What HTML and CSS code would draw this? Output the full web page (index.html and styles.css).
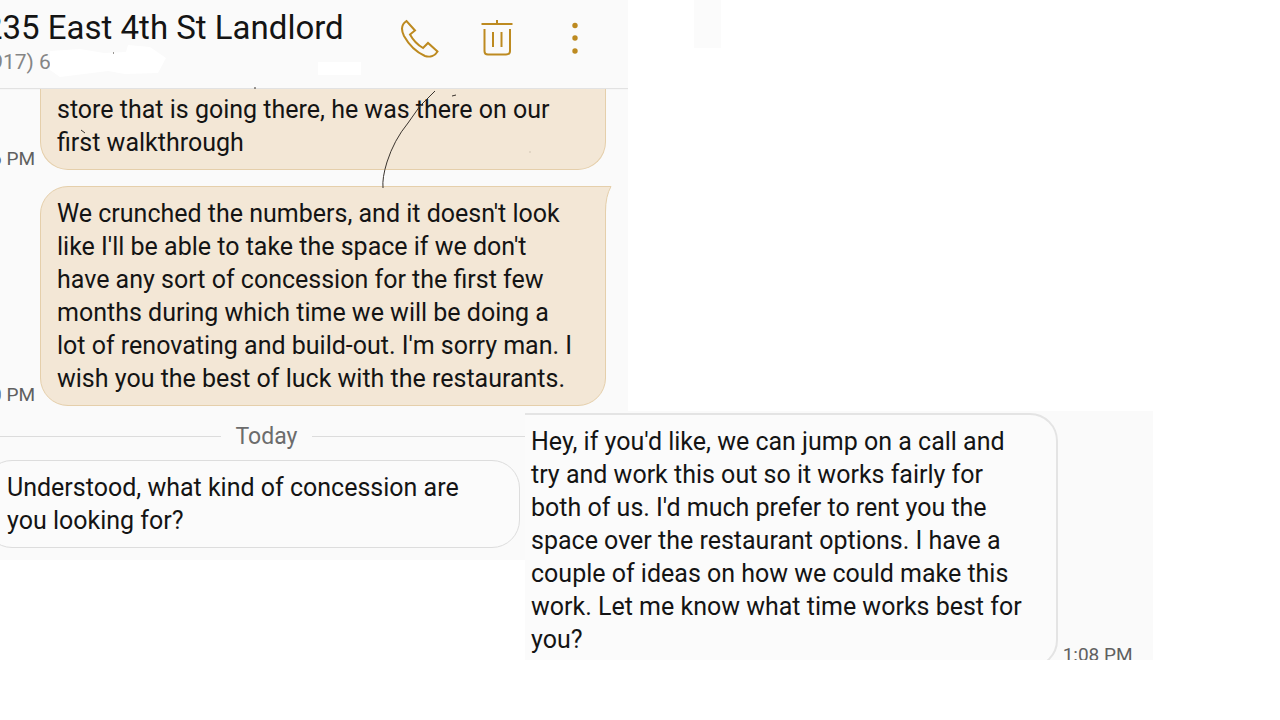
FILE: index.html
```html
<!DOCTYPE html>
<html lang="en">
<head>
<meta charset="utf-8">
<meta name="viewport" content="width=device-width, initial-scale=1">
<title>Messages</title>
<link rel="stylesheet" href="styles.css">
</head>
<body>
<main class="collage">
  <section class="panel thread">
    <header class="bar">
      <div class="contact">
        <h1 class="name">235 East 4th St Landlord</h1>
        <p class="number">(917) 6</p>
      </div>
      <button class="action" type="button" aria-label="Call">
        <svg width="40" height="40" viewBox="0 0 40 40"><path d="M7.500 2 C3 5 1.500 10 5 17 C10 26 17 33 26 37 C31 38.500 36 37 38.500 32.500 L29 24 L24 29 C18 25.500 14 21 11 15.500 L16 11.500 Z"/></svg>
      </button>
      <button class="action" type="button" aria-label="Delete">
        <svg width="40" height="40" viewBox="0 0 40 40"><path d="M4.500 5 H35.500 M20 1 V5 M7.500 10 V32 Q7.500 35.500 11 35.500 H29 Q33 35.500 33 32 V10 M16 13 V28 M24.500 13 V28"/></svg>
      </button>
      <button class="action" type="button" aria-label="More options">
        <svg class="dots" width="40" height="40" viewBox="0 0 40 40"><circle cx="20" cy="6.500" r="2.700"/><circle cx="20" cy="19" r="2.700"/><circle cx="20" cy="32" r="2.700"/></svg>
      </button>
    </header>
    <div class="row">
      <time class="stamp">6 PM</time>
      <p class="bubble sent continued">store that is going there, he was there on our<br>first walkthrough</p>
    </div>
    <div class="row">
      <time class="stamp">0 PM</time>
      <p class="bubble sent latest">We crunched the numbers, and it doesn't look<br>like I'll be able to take the space if we don't<br>have any sort of concession for the first few<br>months during which time we will be doing a<br>lot of renovating and build-out. I'm sorry man. I<br>wish you the best of luck with the restaurants.
        <svg class="tail" width="8" height="26" viewBox="0 0 8 26"><path class="tail-fill" d="M0 0.500 H7 Q1.500 10 1.500 26 H0 Z"/><path class="tail-edge" d="M0 0.500 H7 Q1.500 10 1.500 26"/></svg>
      </p>
    </div>
    <svg class="marks" width="628" height="200" viewBox="0 0 628 200" aria-hidden="true">
      <path class="erased" d="M50 51 L80 49 L104 53 L126 52 L128 45 L150 47 L166 58 L158 73 L125 74 L108 71 L60 77 L50 70 Z M318 62 H361 V75 H318 Z"/>
      <path class="scratch" d="M435 91 L420 106 L408 123 Q394 140 387 162 Q382 178 383 188 M452 96 L456 95 M81 130 L85 133 M254 88 L256 88 M113 53 L114 53"/>
      <circle class="speck" cx="530" cy="152" r="1"/>
    </svg>
  </section>
  <div class="patch"></div>
  <section class="panel reply">
    <div class="day"><span>Today</span></div>
    <p class="bubble received">Understood, what kind of concession are<br>you looking for?</p>
  </section>
  <section class="panel followup">
    <p class="bubble received cut">Hey, if you'd like, we can jump on a call and<br>try and work this out so it works fairly for<br>both of us. I'd much prefer to rent you the<br>space over the restaurant options. I have a<br>couple of ideas on how we could make this<br>work. Let me know what time works best for<br>you?</p>
    <time class="sent-at">1:08 PM</time>
  </section>
</main>
</body>
</html>
```
FILE: styles.css
```css
* { box-sizing: border-box; }

body {
  margin: 0;
  background: #fff;
  color: #141414;
  font-family: Roboto, "Liberation Sans", sans-serif;
}

h1, p { margin: 0; font-weight: 400; }

.collage {
  display: grid;
  grid-template-columns: 525fr 103fr 525fr 127fr;
  align-items: start;
  overflow: hidden;
}

.panel {
  background: #fafafa;
  overflow: hidden;
  white-space: nowrap;
}

.thread {
  grid-column: 1 / 3;
  grid-row: 1;
  position: relative;
  padding-bottom: 5px;
}

.bar {
  display: flex;
  align-items: flex-start;
  gap: 38px;
  padding: 8px 33px 0 0;
  margin-bottom: 1px;
  height: 88px;
  box-shadow: 0 1px 1px #e2e2e2;
}

.contact { flex: 1; margin-left: -16px; }

.name { font-size: 33px; line-height: 40px; }

.number {
  margin-top: 1px;
  color: #858585;
  font-size: 21px;
  line-height: 26px;
}

.action {
  margin-top: 11px;
  padding: 0;
  border: 0;
  background: none;
  line-height: 0;
}

.action svg { fill: none; stroke: #bd8a20; stroke-width: 2; }
.action .dots { fill: #bd8a20; stroke: none; }

.row {
  display: flex;
  align-items: flex-end;
  padding-right: 22px;
}

.row + .row { margin-top: 16px; }

.stamp {
  display: flex;
  justify-content: flex-end;
  flex: none;
  width: 40px;
  padding-right: 5px;
  color: #606060;
  font-size: 19px;
  line-height: 22px;
}

.bubble {
  position: relative;
  border: 1px solid #ddd;
  border-radius: 28px;
  font-size: 25px;
  line-height: 33px;
}

.sent {
  flex: 1;
  padding: 10px 16px;
  border-color: #e5cfab;
  background: #f3e7d6;
}

.continued {
  padding-top: 4px;
  border-top: 0;
  border-radius: 0 0 28px 28px;
}

.latest { border-top-right-radius: 0; }

.tail { position: absolute; top: -1px; right: -7px; }
.tail-fill { fill: #f3e7d6; }
.tail-edge { fill: none; stroke: #e5cfab; }

.marks { position: absolute; top: 0; left: 0; pointer-events: none; }
.erased { fill: #fff; }
.scratch { fill: none; stroke: #3a342e; stroke-width: 1; }
.speck { fill: #ddd0bf; }

.patch {
  grid-column: 3;
  grid-row: 1;
  width: 27px;
  height: 48px;
  margin-left: 66px;
  background: #fbfbfb;
}

.reply {
  grid-column: 1;
  grid-row: 2;
  padding: 12px 5px 12px 0;
}

.day {
  display: flex;
  align-items: center;
  gap: 15px;
  margin: 0 -5px 10px 0;
  color: #6c6c6c;
  font-size: 23px;
  line-height: 27px;
}

.day::before, .day::after { content: ""; height: 1px; background: #dcdcdc; }
.day::before { flex: 222; }
.day::after { flex: 214; }

.received {
  margin-left: -16px;
  padding: 10px 22px;
  background: #fbfbfb;
}

.followup {
  grid-column: 2 / 4;
  grid-row: 2;
  display: flex;
  align-items: flex-end;
  gap: 6px;
  height: 249px;
  padding: 2px 23px 0 0;
}

.cut {
  flex: 1;
  align-self: flex-start;
  margin: 0 5px 0 -30px;
  padding: 10px 34px;
  border-width: 2px;
  border-color: #e4e4e4;
}

.followup { gap: 0; }

.sent-at {
  margin-bottom: -6px;
  padding-right: 5px;
  color: #606060;
  font-size: 19px;
  line-height: 22px;
}
```
